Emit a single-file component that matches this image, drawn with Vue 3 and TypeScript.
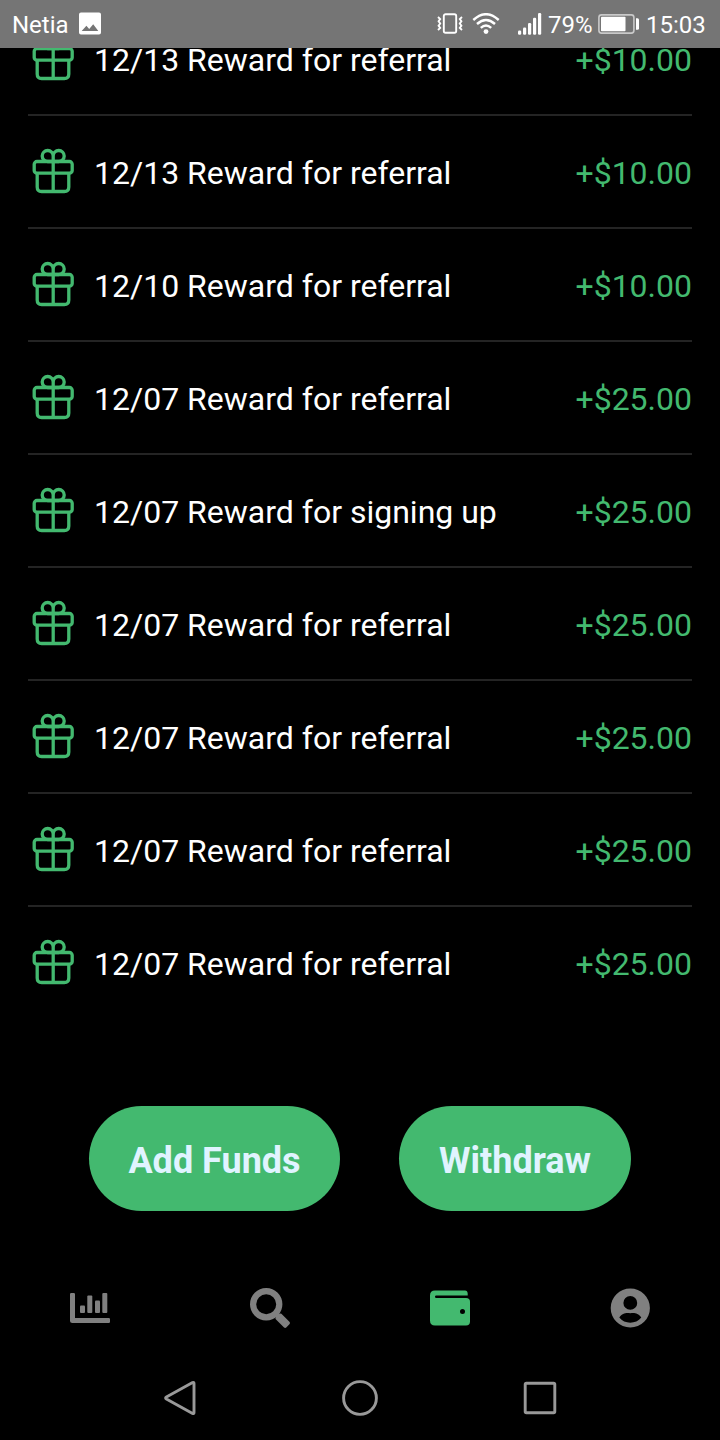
<script setup lang="ts">
interface Transaction {
  date: string
  label: string
  amount: string
}

const transactions: Transaction[] = [
  { date: '12/13', label: 'Reward for referral', amount: '+$10.00' },
  { date: '12/13', label: 'Reward for referral', amount: '+$10.00' },
  { date: '12/10', label: 'Reward for referral', amount: '+$10.00' },
  { date: '12/07', label: 'Reward for referral', amount: '+$25.00' },
  { date: '12/07', label: 'Reward for signing up', amount: '+$25.00' },
  { date: '12/07', label: 'Reward for referral', amount: '+$25.00' },
  { date: '12/07', label: 'Reward for referral', amount: '+$25.00' },
  { date: '12/07', label: 'Reward for referral', amount: '+$25.00' },
  { date: '12/07', label: 'Reward for referral', amount: '+$25.00' },
]
</script>

<template>
  <div class="screen">
    <header class="status">
      <span class="carrier">Netia</span>
      <svg class="photo" width="24" height="24" viewBox="0 0 24 24">
        <path fill="#fff" fill-rule="evenodd" d="M3 0.5H21Q23 0.5 23 2.5V20.5Q23 22.5 21 22.5H3Q1 22.5 1 20.5V2.5Q1 0.5 3 0.5ZM3.7 19H20.3L15.2 12.2L11.2 17.1L8.4 13.8Z" />
      </svg>
      <span class="spacer"></span>
      <svg class="vibrate" width="26" height="22" viewBox="0 0 26 22" fill="none" stroke="#fff">
        <rect x="6.8" y="1.2" width="12.4" height="18.6" rx="1.8" stroke-width="1.9" />
        <path stroke-width="1.9" d="M1 4L3.2 6.1L1.6 8.3L3.2 10.5L1.6 12.7L3.2 14.9L1 17M25 4L22.8 6.1L24.4 8.3L22.8 10.5L24.4 12.7L22.8 14.9L25 17" />
      </svg>
      <svg class="wifi" width="28" height="22" viewBox="0 0 28 22" fill="none" stroke="#fff" stroke-width="2.4">
        <path d="M1.3 7Q14 -4.6 26.7 7M5 11Q14 2.8 23 11M8.8 14.8Q14 10 19.2 14.8" />
        <circle cx="14" cy="18.6" r="2.4" fill="#fff" stroke="none" />
      </svg>
      <svg class="signal" width="24" height="22" viewBox="0 0 24 22" fill="#fff">
        <rect x="0" y="17.6" width="3.2" height="4.2" rx="1.2" />
        <rect x="5" y="14.5" width="3.2" height="7.3" rx="1.2" />
        <rect x="10" y="10" width="3.2" height="11.8" rx="1.2" />
        <rect x="15" y="4.8" width="3.2" height="17" rx="1.2" />
        <rect x="20" y="0" width="3.2" height="21.8" rx="1.2" />
      </svg>
      <span class="percent">79%</span>
      <svg class="battery" width="42" height="20" viewBox="0 0 42 20">
        <rect x="0.9" y="0.9" width="35" height="18.2" rx="2.6" fill="none" stroke="#c9c9c9" stroke-width="1.6" />
        <rect x="3" y="2.7" width="24.5" height="14.6" rx="0.8" fill="#fff" />
        <path d="M38 4.3H39.5Q41 4.3 41 5.8V14.2Q41 15.7 39.5 15.7H38Z" fill="#fff" />
      </svg>
      <span class="clock">15:03</span>
    </header>

    <main class="content">
      <ul class="list">
        <li v-for="(item, index) in transactions" :key="index" class="row">
          <svg class="gift" width="44" height="48" viewBox="0 0 44 48" fill="none" stroke="#43b96f" stroke-width="3.3" stroke-linejoin="round">
            <rect x="3.2" y="14.5" width="38" height="11.7" rx="2.8" />
            <path d="M6.2 26.2V40Q6.2 44.5 10.7 44.5H33.3Q37.8 44.5 37.8 40V26.2" />
            <path d="M22.2 14.5V9A5.5 5.5 0 1 0 16.7 14.5ZM22.2 14.5V9A5.5 5.5 0 1 1 27.7 14.5Z" />
            <path d="M22.2 14.5V44.5" />
          </svg>
          <span class="label">{{ item.date }} {{ item.label }}</span>
          <span class="amount">{{ item.amount }}</span>
        </li>
      </ul>
    </main>

    <section class="actions">
      <button class="action add" type="button">Add Funds</button>
      <button class="action withdraw" type="button">Withdraw</button>
    </section>

    <nav class="tabs">
      <a class="tab">
        <svg width="40" height="40" viewBox="0 0 40 40" fill="currentColor">
          <path d="M1.2 5H3.8Q5 5 5 6.2V30H38.8Q40 30 40 31.2V33.8Q40 35 38.8 35H2.5Q0 35 0 32.5V6.2Q0 5 1.2 5Z" />
          <rect x="10" y="17.5" width="5" height="7.5" rx="1" />
          <rect x="17.3" y="7.5" width="5" height="17.5" rx="1" />
          <rect x="25" y="12.5" width="5" height="12.5" rx="1" />
          <rect x="32.3" y="5" width="5" height="20" rx="1" />
        </svg>
      </a>
      <a class="tab">
        <svg width="40" height="40" viewBox="0 0 40 40" fill="none" stroke="currentColor">
          <circle cx="16.2" cy="16.2" r="13.1" stroke-width="6.2" />
          <path fill="currentColor" stroke="none" d="M25.8 29.5L29.5 25.8Q30.5 25 31.4 25.8L39.4 33.7Q40.6 35 39.4 36.2L36.5 39.3Q35.2 40.5 33.8 39.3L26 31.5Q25 30.5 25.8 29.5Z" />
          <path stroke-width="5" d="M24.5 24.5L29 29" />
        </svg>
      </a>
      <a class="tab active">
        <svg width="40" height="40" viewBox="0 0 40 40" fill="currentColor">
          <path fill-rule="evenodd" d="M5 2.5H35Q37.5 2.5 37.7 5.6V7.5H6.2Q5 7.5 5 8.7Q5 10 6.2 10H36Q40 10 40 13.7V33.5Q40 37.5 36 37.5H5Q0 37.5 0 32.5V7.5Q0 2.5 5 2.5ZM32.5 21A2.5 2.5 0 1 0 32.5 26A2.5 2.5 0 1 0 32.5 21Z" />
        </svg>
      </a>
      <a class="tab">
        <svg width="40" height="40" viewBox="0 0 40 40" fill="currentColor">
          <path fill-rule="evenodd" d="M20.3 0.4A19.6 19.6 0 1 0 20.3 39.6A19.6 19.6 0 1 0 20.3 0.4ZM20.3 8A6.9 6.9 0 1 1 20.3 21.8A6.9 6.9 0 1 1 20.3 8ZM9.3 29.6C12.5 24.8 16 24.8 20.3 25.2C24.6 24.8 28 24.8 31.3 29.6C26 36.5 14.5 36.5 9.3 29.6Z" />
        </svg>
      </a>
    </nav>

    <footer class="system">
      <svg width="36" height="36" viewBox="0 0 36 36"><path d="M30.6 2.6Q32 1.8 32 3.4V32.6Q32 34.2 30.6 33.4L4.4 19Q2.8 18 4.4 17Z" /></svg>
      <svg width="36" height="36" viewBox="0 0 36 36"><circle cx="18" cy="18" r="16.4" /></svg>
      <svg width="36" height="36" viewBox="0 0 36 36"><rect x="3.2" y="3.2" width="29.6" height="29.6" rx="1.2" /></svg>
    </footer>
  </div>
</template>

<style>
body {
  margin: 0;
  background: #000;
}
</style>

<style scoped>
.screen {
  box-sizing: border-box;
  display: flex;
  flex-direction: column;
  width: 720px;
  height: 1440px;
  overflow: hidden;
  background: #000;
  color: #fff;
  font-family: Roboto, "Noto Sans", sans-serif;
}

svg {
  display: block;
  flex: none;
}

.status {
  box-sizing: border-box;
  display: flex;
  flex: none;
  align-items: center;
  height: 48px;
  padding: 2px 16px 2px 12px;
  background: #757575;
  font-size: 24px;
  line-height: 44px;
  white-space: nowrap;
}

.carrier {
  width: 66px;
  padding-top: 2px;
}

.spacer {
  flex: 1;
}

.wifi {
  margin-left: 9px;
}

.signal {
  margin-left: 18px;
}

.percent {
  width: 43px;
  margin-left: 6px;
  padding-top: 2px;
}

.battery {
  margin-left: 7px;
}

.clock {
  width: 58px;
  margin-left: 6px;
  padding-top: 2px;
}

.content {
  flex: none;
  height: 972px;
  padding: 0 28px;
  overflow: hidden;
}

.list {
  margin: -45px 0 0;
  padding: 0;
  list-style: none;
}

.row {
  box-sizing: border-box;
  display: flex;
  align-items: center;
  height: 113px;
  border-bottom: 2px solid #242424;
  font-size: 32px;
  white-space: nowrap;
}

.row:last-child {
  border-bottom-color: transparent;
}

.gift {
  margin: 0 0 2px 3px;
}

.label {
  margin-left: 19px;
  padding-top: 2px;
}

.amount {
  margin-left: auto;
  padding-top: 2px;
  color: #43b96f;
}

.actions {
  display: flex;
  flex: none;
  justify-content: center;
  gap: 59px;
  margin-top: 86px;
}

.action {
  height: 105px;
  padding: 5px 0 0;
  border: 0;
  border-radius: 53px;
  background: #43b96f;
  color: #e0f4ff;
  font: 700 36px Roboto, "Noto Sans", sans-serif;
  white-space: nowrap;
}

.add {
  width: 251px;
}

.withdraw {
  width: 232px;
}

.tabs {
  display: grid;
  flex: none;
  grid-template-columns: repeat(4, 1fr);
  margin-top: 77px;
}

.tab {
  display: flex;
  justify-content: center;
  color: #808080;
}

.active {
  color: #43b96f;
}

.system {
  display: flex;
  justify-content: space-between;
  margin-top: 52px;
  padding: 0 162px;
}

.system svg {
  fill: none;
  stroke: #999;
  stroke-width: 2.9;
}
</style>
